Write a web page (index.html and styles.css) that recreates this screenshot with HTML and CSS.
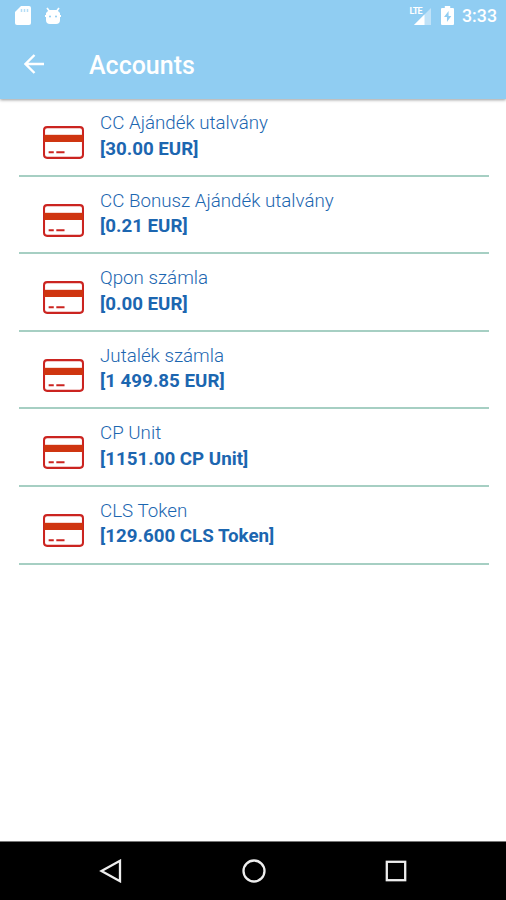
FILE: index.html
```html
<!DOCTYPE html>
<html lang="hu">
<head>
    <meta charset="UTF-8">
    <meta name="viewport" content="width=device-width, initial-scale=1.0">
    <title>Accounts</title>
    <link rel="stylesheet" href="styles.css">
</head>
<body>

    <!-- Shared card icon -->
    <svg class="symbols" width="0" height="0">
        <symbol id="card" viewBox="0 0 40 32">
            <rect x="1" y="1" width="38" height="30" rx="3" fill="none" stroke="#cb2420" stroke-width="2"/>
            <rect x="1" y="8.5" width="38" height="7" fill="#cf3510"/>
            <path d="M5.5 25.5h5M13 25.5h8" stroke="#cb2420" stroke-width="2"/>
        </symbol>
    </svg>

    <header class="header">
        <div class="status-bar">
            <svg class="sd-icon" width="16" height="19" viewBox="0 0 16 19">
                <path d="M6 0h8a2 2 0 0 1 2 2v15a2 2 0 0 1-2 2H2a2 2 0 0 1-2-2V6z" fill="#fff"/>
                <path d="M6.5 3v3M9.5 3v3M12.5 3v3" stroke="#b5ddf6" stroke-width="1.5"/>
            </svg>
            <svg class="debug-icon" width="16" height="18" viewBox="0 0 16 18">
                <path d="M2 1l3 4M14 1l-3 4" stroke="#fff" stroke-width="1.7"/>
                <path d="M1 6l3-3h8l3 3v7a4 4 0 0 1-4 4H5a4 4 0 0 1-4-4z" fill="#fff"/>
                <path d="M0 9h16" stroke="#fff" stroke-width="2"/>
                <circle cx="5" cy="9.5" r="1" fill="#90cdf2"/>
                <circle cx="11" cy="9.5" r="1" fill="#90cdf2"/>
            </svg>
            <div class="signal">
                <span class="lte">LTE</span>
                <svg width="17" height="17" viewBox="0 0 17 17">
                    <path d="M17 0v17H0z" fill="#c0e2f8"/>
                    <path d="M10.5 6.5V17H0z" fill="#fff"/>
                </svg>
            </div>
            <svg class="battery-icon" width="13" height="19" viewBox="0 0 12 19" preserveAspectRatio="none">
                <path d="M3.5 0h5v2H11a1 1 0 0 1 1 1v15a1 1 0 0 1-1 1H1a1 1 0 0 1-1-1V3a1 1 0 0 1 1-1h2.500z" fill="#fff"/>
                <path d="M7 5L2.800 11h2.700v5l4-6H7z" fill="#90cdf2"/>
            </svg>
            <span class="time">3:33</span>
        </div>
        <div class="toolbar">
            <svg class="back-icon" width="20" height="20" viewBox="0 0 20 20">
                <path d="M20 10H2M10.500 1L1.500 10l9 9" fill="none" stroke="#fff" stroke-width="2.400"/>
            </svg>
            <h1>Accounts</h1>
        </div>
    </header>

    <main class="accounts">
        <div class="account">
            <svg class="card-icon"><use href="#card"/></svg>
            <div class="info">
                <div class="name">CC Ajándék utalvány</div>
                <div class="balance">[30.00 EUR]</div>
            </div>
        </div>
        <div class="account">
            <svg class="card-icon"><use href="#card"/></svg>
            <div class="info">
                <div class="name">CC Bonusz Ajándék utalvány</div>
                <div class="balance">[0.21 EUR]</div>
            </div>
        </div>
        <div class="account">
            <svg class="card-icon"><use href="#card"/></svg>
            <div class="info">
                <div class="name">Qpon számla</div>
                <div class="balance">[0.00 EUR]</div>
            </div>
        </div>
        <div class="account">
            <svg class="card-icon"><use href="#card"/></svg>
            <div class="info">
                <div class="name">Jutalék számla</div>
                <div class="balance">[1 499.85 EUR]</div>
            </div>
        </div>
        <div class="account">
            <svg class="card-icon"><use href="#card"/></svg>
            <div class="info">
                <div class="name">CP Unit</div>
                <div class="balance">[1151.00 CP Unit]</div>
            </div>
        </div>
        <div class="account">
            <svg class="card-icon"><use href="#card"/></svg>
            <div class="info">
                <div class="name">CLS Token</div>
                <div class="balance">[129.600 CLS Token]</div>
            </div>
        </div>
    </main>

    <nav class="nav-bar">
        <svg width="24" height="24" viewBox="0 0 24 24">
            <path d="M21 1.800v20.400L2.500 12z"/>
        </svg>
        <svg width="24" height="24" viewBox="0 0 24 24">
            <circle cx="12" cy="12" r="10.500"/>
        </svg>
        <svg width="24" height="24" viewBox="0 0 24 24">
            <rect x="2.800" y="2.800" width="18.400" height="18.400"/>
        </svg>
    </nav>

</body>
</html>
```

FILE: styles.css
```css
* {
    box-sizing: border-box;
}

body {
    margin: 0;
    height: 100vh;
    display: flex;
    flex-direction: column;
    font-family: Roboto, sans-serif;
    background-color: #ffffff;
    color: #1c66b0;
    overflow: hidden;
}

.symbols {
    position: absolute;
}

.header {
    height: 99px;
    flex: none;
    background-color: #90cdf2;
    color: #ffffff;
    box-shadow: 0 1px 3px rgba(0, 0, 0, 0.4);
}

.status-bar {
    display: flex;
    align-items: center;
    height: 31px;
    padding: 0 9px 0 15px;
}

.debug-icon {
    margin-left: 14px;
}

.signal {
    display: flex;
    align-items: flex-end;
    height: 18px;
    margin-left: auto;
    margin-right: 10px;
}

.lte {
    align-self: flex-start;
    margin-right: -8px;
    font-size: 9px;
    font-weight: 700;
    line-height: 8px;
    letter-spacing: -0.7px;
}

.time {
    margin-left: 8px;
    font-size: 17.8px;
    font-weight: 500;
}

.toolbar {
    display: flex;
    align-items: center;
    height: 68px;
    padding: 0 0 2px 24px;
}

h1 {
    margin: 2px 0 0 45px;
    font-size: 25px;
    font-weight: 500;
}

.accounts {
    flex: 1;
    padding: 0 17px 0 19px;
}

.account {
    display: flex;
    height: 77.6px;
    padding: 12px 0 0 24px;
    border-bottom: 2px solid #a6cfc3;
}

.card-icon {
    width: 41px;
    height: 33px;
    margin-top: 15px;
}

.info {
    margin-left: 16px;
    font-size: 18.75px;
    line-height: 25.5px;
}

.name {
    font-weight: 300;
}

.balance {
    font-weight: 700;
}

.nav-bar {
    display: flex;
    justify-content: space-between;
    align-items: center;
    height: 59px;
    padding: 0 98px 0 99px;
    border-top: 1px solid #777777;
    background-color: #000000;
}

.nav-bar svg {
    fill: none;
    stroke: #eeeeee;
    stroke-width: 2.3;
}
```
